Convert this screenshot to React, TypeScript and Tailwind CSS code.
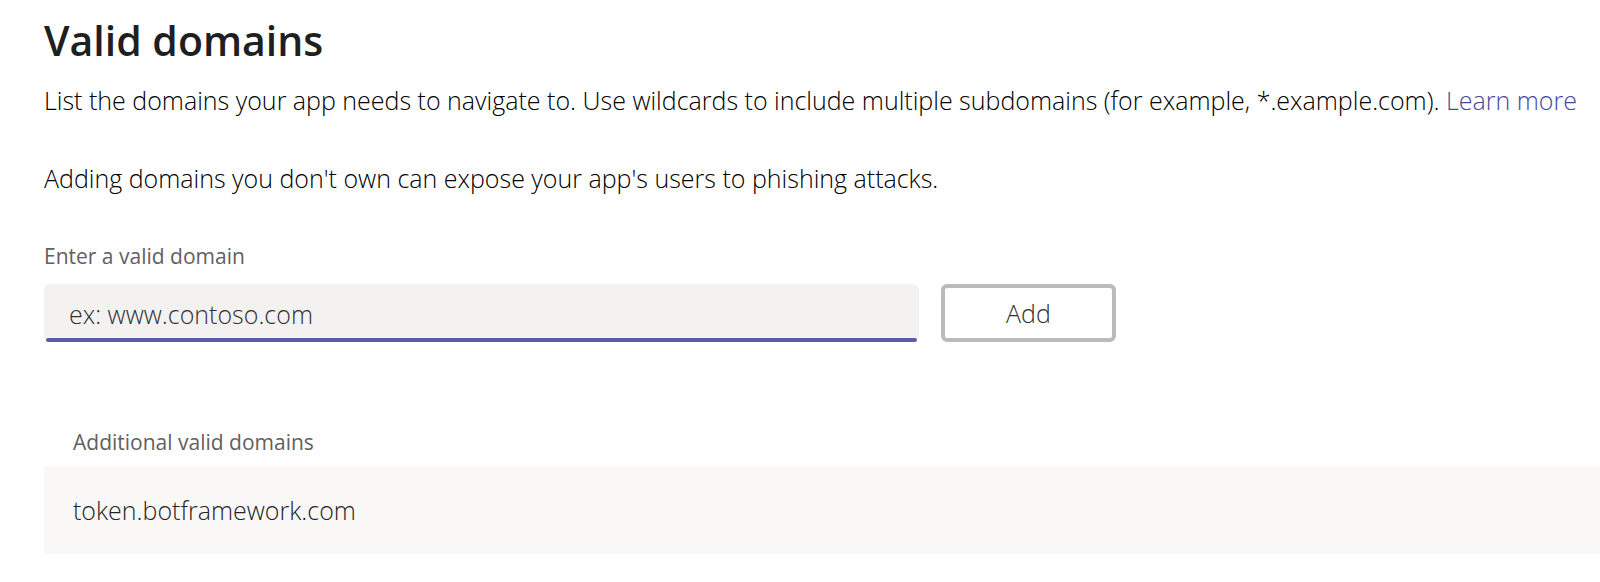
export default function App() {
  return (
    <main className="bg-white pl-11 pt-4 pb-7 font-['Open_Sans','Noto_Sans',sans-serif] font-light text-black">
      <h1 className="text-[41px] leading-[48px] font-semibold text-[#201f1f]">Valid domains</h1>
      <p className="mt-5 text-[25px] leading-8 whitespace-nowrap">
        List the domains your app needs to navigate to. Use wildcards to include multiple subdomains (for example, *.example.com).{' '}
        <a href="#learn" className="text-[#4548a0]">Learn more</a>
      </p>
      <p className="mt-[46px] text-[25px] leading-8">Adding domains you don't own can expose your app's users to phishing attacks.</p>
      <form className="mt-12" onSubmit={(e) => e.preventDefault()}>
        <label htmlFor="domain" className="block text-[21px] leading-7 font-normal text-[#62605e]">Enter a valid domain</label>
        <div className="mt-[14px] flex gap-[22px]">
          <div className="relative w-[875px]">
            <input id="domain" type="text" placeholder="ex: www.contoso.com" className="block h-[58px] w-full rounded-md bg-[#f3f2f1] px-[25px] pt-0.5 text-[25px] outline-none placeholder:text-[#323130]" />
            <span className="absolute inset-x-0.5 bottom-0 h-1 rounded-full bg-[#5b5ea6]" />
          </div>
          <button type="submit" className="h-[58px] w-[175px] rounded-md border-4 border-[#bbbbbb] pt-0.5 text-[25px] text-[#323130]">Add</button>
        </div>
      </form>
      <section className="mt-[86px]">
        <h2 className="pl-[29px] text-[21px] leading-7 font-normal text-[#62605e]">Additional valid domains</h2>
        <div className="mt-[10px] flex h-[88px] items-center bg-[#f9f8f7] pt-0.5 pl-[29px] text-[25px] text-[#252423]">token.botframework.com</div>
      </section>
    </main>
  )
}
